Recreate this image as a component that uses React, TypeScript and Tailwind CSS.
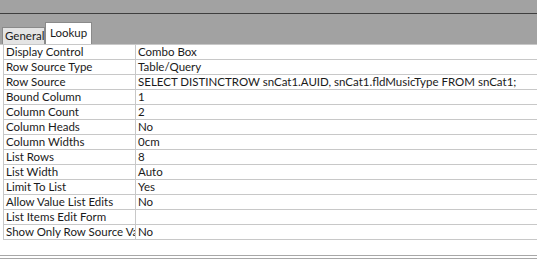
import React from "react";

const rows: [string, string][] = [
  ["Display Control", "Combo Box"],
  ["Row Source Type", "Table/Query"],
  ["Row Source", "SELECT DISTINCTROW snCat1.AUID, snCat1.fldMusicType FROM snCat1;"],
  ["Bound Column", "1"],
  ["Column Count", "2"],
  ["Column Heads", "No"],
  ["Column Widths", "0cm"],
  ["List Rows", "8"],
  ["List Width", "Auto"],
  ["Limit To List", "Yes"],
  ["Allow Value List Edits", "No"],
  ["List Items Edit Form", ""],
  ["Show Only Row Source Values", "No"],
];

const App: React.FC = () => {
  return (
    <div
      className="w-[537px] h-[260px] overflow-hidden bg-white flex flex-col text-[11.5px] text-[#1a1a1a]"
      style={{ fontFamily: '"Segoe UI", Lato, sans-serif' }}
    >
      {/* Header strip */}
      <div className="bg-[#a2a2a2] h-[44px] flex flex-col shrink-0">
        <div className="h-[13px]" />
        <div className="h-px bg-[#3e3e3e]" />
        <div className="flex-1 flex items-end pl-[2px]">
          <div className="h-[17px] w-[43px] bg-[#e4e4e4] border border-b-0 border-[#8a8a8a] flex items-end pb-[1px] pl-[2px] leading-[14px] whitespace-nowrap overflow-hidden">
            General
          </div>
          <div className="h-[22px] w-[47px] bg-white border border-b-0 border-[#8a8a8a] flex items-end pb-[4px] pl-[4px] leading-[14px] whitespace-nowrap">
            Lookup
          </div>
        </div>
      </div>

      {/* Property sheet */}
      <div className="border-t border-[#c8c8c8] pl-[3px]">
        {rows.map(([label, value]) => (
          <div key={label} className="flex h-[15px] border-b border-[#c8c8c8] leading-[14px]">
            <div className="w-[133px] shrink-0 border-l border-r border-[#c8c8c8] pl-[2px] overflow-hidden whitespace-nowrap">
              {label}
            </div>
            <div className="flex-1 pl-[2px] whitespace-nowrap overflow-hidden">{value}</div>
          </div>
        ))}
      </div>

      <div className="flex-1" />
      <div className="h-[4px] border-t border-b border-[#a8a8a8] mb-[1px] shrink-0" />
    </div>
  );
};

export default App;
